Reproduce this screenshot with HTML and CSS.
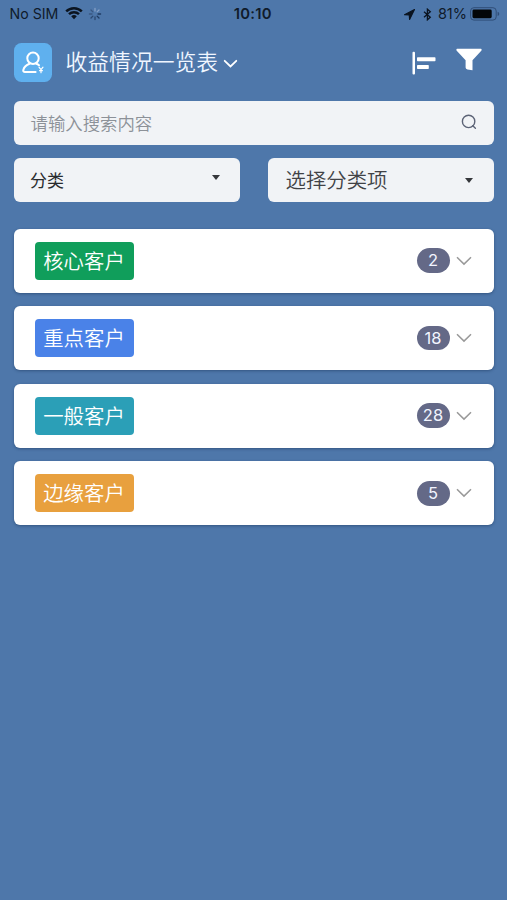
FILE: index.html
```html
<!DOCTYPE html>
<html lang="zh-CN">
<head>
<meta charset="utf-8">
<title>收益情况一览表</title>
<link rel="stylesheet" href="styles.css">
</head>
<body>
<div class="status">
  <div class="status-left">
    <span class="carrier">No SIM</span>
    <svg class="wifi" width="18" height="14" viewBox="0 0 18 14"><path d="M1.2 5.3a11.2 11.2 0 0 1 15.6 0M4 8.2a7.2 7.2 0 0 1 10 0" fill="none" stroke="#0b1420" stroke-width="2.5"/><path d="M9 13.2 6.2 10.3a4 4 0 0 1 5.6 0z" fill="#0b1420"/></svg>
    <svg class="spinner" width="14" height="14" viewBox="-7 -7 14 14" stroke-width="1.3" stroke-linecap="round"><path d="M0-3V-5.6M2.1-2.1 4-4" stroke="#86a0c6"/><path d="M3 0H5.6M2.1 2.1 4 4" stroke="#203c63"/><path d="M0 3V5.6M-2.1 2.1-4 4" stroke="#2c4870"/><path d="M-3 0H-5.6M-2.1-2.1-4-4" stroke="#3a5882"/></svg>
  </div>
  <span class="time">10:10</span>
  <div class="status-right">
    <svg class="location" width="11" height="11" viewBox="0 0 11 11"><path d="M.5 5.7 10.5.5 5.6 10.5 5.2 6z" fill="#0b1420" stroke="#0b1420" stroke-width="1.1" stroke-linejoin="round"/></svg>
    <svg class="bluetooth" width="9" height="13" viewBox="0 0 9 13"><path d="M1 3.8 7.3 9.2 4.4 11.8V1.2L7.3 3.8 1 9.2" fill="none" stroke="#0b1420" stroke-width="1.3"/></svg>
    <span class="percent">81%</span>
    <svg class="battery" width="30" height="14" viewBox="0 0 30 14"><rect x=".6" y=".7" width="25.6" height="12.4" rx="3.3" fill="none" stroke="#304e78"/><rect x="2.5" y="2.6" width="19.2" height="8.6" rx="1.4" fill="#030609"/><path d="M27.6 4.8v4.2q1.7-.5 1.7-2.1t-1.7-2.1" fill="#304e78"/></svg>
  </div>
</div>

<header class="header">
  <svg class="app-icon" width="38" height="39" viewBox="0 0 38 39"><rect width="38" height="39" rx="7.5" fill="#5fb0ee"/><g fill="none" stroke="#fff" stroke-linecap="round" stroke-linejoin="round"><circle cx="19" cy="15.2" r="5.7" stroke-width="2"/><path d="M21.6 29H11q-2.2 0-1.7-2.1 1.2-4.4 6.2-6.2M22.4 20.7q1.6.6 2.6 1.6" stroke-width="2"/><path d="m25 24.2 2 2.5 2-2.5M27 26.7v3M25.6 27.7h2.8" stroke-width="1.2"/></g></svg>
  <h1 class="title">收益情况一览表</h1>
  <svg class="title-arrow" width="15" height="10" viewBox="0 0 15 10"><path d="m1.7 1.8 5.8 5.7 5.8-5.7" fill="none" stroke="#fff" stroke-width="1.8" stroke-linecap="round"/></svg>
  <svg class="sort" width="24" height="24" viewBox="0 0 24 24" fill="#fff"><rect x=".5" y=".7" width="2.5" height="22.8" rx="1"/><rect x="5" y="6.2" width="18.5" height="4" rx=".7"/><rect x="5" y="14" width="11.8" height="4" rx=".7"/></svg>
  <svg class="filter" width="26" height="23" viewBox="0 0 26 23"><path d="M1 .8H25Q26 1 25.5 2.5L16.5 12.3V22.2L11.5 21.6Q9.6 21.2 9.6 19.6V12.3L.5 2.5Q0 1 1 .8z" fill="#fff"/></svg>
</header>

<main class="content">
  <div class="field search">
    <span>请输入搜索内容</span>
    <svg width="16" height="16" viewBox="0 0 16 16" fill="none" stroke="#5c6376" stroke-width="1.4" stroke-linecap="round"><circle cx="7.6" cy="7.4" r="6.2"/><path d="m11.8 11.8 2.6 2.4"/></svg>
  </div>
  <div class="selects">
    <div class="field category"><span>分类</span><i class="caret"></i></div>
    <div class="field option"><span>选择分类项</span><i class="caret"></i></div>
  </div>
  <div class="list">
    <section class="card"><span class="tag core">核心客户</span><span class="count">2</span><svg class="chevron" width="16" height="10" viewBox="0 0 16 10"><path d="m1 1.2 7 6.9 7-6.9"/></svg></section>
    <section class="card"><span class="tag key">重点客户</span><span class="count">18</span><svg class="chevron" width="16" height="10" viewBox="0 0 16 10"><path d="m1 1.2 7 6.9 7-6.9"/></svg></section>
    <section class="card"><span class="tag normal">一般客户</span><span class="count">28</span><svg class="chevron" width="16" height="10" viewBox="0 0 16 10"><path d="m1 1.2 7 6.9 7-6.9"/></svg></section>
    <section class="card"><span class="tag edge">边缘客户</span><span class="count">5</span><svg class="chevron" width="16" height="10" viewBox="0 0 16 10"><path d="m1 1.2 7 6.9 7-6.9"/></svg></section>
  </div>
</main>
</body>
</html>
```
FILE: styles.css
```css
* { box-sizing: border-box; }
body {
  margin: 0;
  min-height: 900px;
  background: #4e77aa;
  font-family: Inter, "Noto Sans CJK SC", sans-serif;
}
svg { display: block; flex: none; }
.status {
  display: grid;
  grid-template-columns: 1fr auto 1fr;
  align-items: center;
  height: 28px;
  padding: 0 7px 0 9.5px;
  color: #101b2b;
  font-size: 14px;
  line-height: 28px;
}
.status-left, .status-right { display: flex; align-items: center; }
.status-right { justify-content: flex-end; }
.carrier { width: 49px; font-size: 14.2px; white-space: nowrap; }
.wifi { margin-left: 6px; margin-top: -2px; }
.spinner { margin-left: 5px; }
.time { margin-left: -4px; font-weight: 600; font-size: 14.8px; letter-spacing: .25px; }
.bluetooth { margin-left: 8px; }
.percent { margin: 0 3px 0 6px; font-size: 14.5px; }
.header {
  display: flex;
  align-items: center;
  height: 72.5px;
  padding: 0 25px 3px 14px;
}
.title {
  margin: -1px 0 0 13.5px;
  color: #f0f6ff;
  font-size: 21.8px;
  font-weight: 350;
  line-height: 32px;
  white-space: nowrap;
}
.title-arrow { margin: 2px 0 0 4.5px; }
.sort { margin-left: auto; }
.filter { margin: -7px 0 0 20px; }
.content { padding: 0 13.5px 0 14px; }
.field {
  display: flex;
  align-items: center;
  justify-content: space-between;
  height: 43.5px;
  border-radius: 6px;
  background: #f1f3f6;
  white-space: nowrap;
}
.search {
  height: 44px;
  padding: 0 17px 1px 16.5px;
  color: #8c9198;
  font-size: 17.4px;
  font-weight: 350;
}
.selects {
  display: grid;
  grid-template-columns: 226px 225.5px;
  justify-content: space-between;
  margin-top: 13.5px;
}
.category { padding: 0 20px 0 16px; color: #292b2e; font-size: 17px; }
.option { padding: 0 21px 1px 17.5px; color: #404246; font-size: 20.4px; font-weight: 350; }
.caret {
  border: 3.75px solid transparent;
  border-width: 5px 4px 0;
  border-top-color: #35373b;
}
.category .caret { margin-top: -4px; }
.option .caret { margin-top: 2px; }
.list { display: grid; gap: 13.6px; margin-top: 27px; }
.card {
  display: flex;
  align-items: center;
  height: 64px;
  padding: 0 22px 0 21px;
  border-radius: 6px;
  background: #fff;
  box-shadow: 0 1px 3px rgba(20, 45, 80, .45);
}
.tag {
  width: 99px;
  height: 38px;
  padding-right: 1px;
  border-radius: 4px;
  color: #fff;
  font-size: 20.4px;
  font-weight: 350;
  line-height: 40px;
  text-align: center;
  white-space: nowrap;
}
.core { background: #109e5b; }
.key { background: #4a82e8; }
.normal { background: #2b9fb7; }
.edge { background: #e8a03e; }
.count {
  width: 33px;
  height: 24.5px;
  margin-left: auto;
  border-radius: 13px;
  background: #646987;
  color: #f2f5ff;
  font-size: 16.5px;
  line-height: 24px;
  text-align: center;
}
.chevron { margin-left: 6px; }
.chevron path { fill: none; stroke: #999; stroke-width: 1.5; }
```
